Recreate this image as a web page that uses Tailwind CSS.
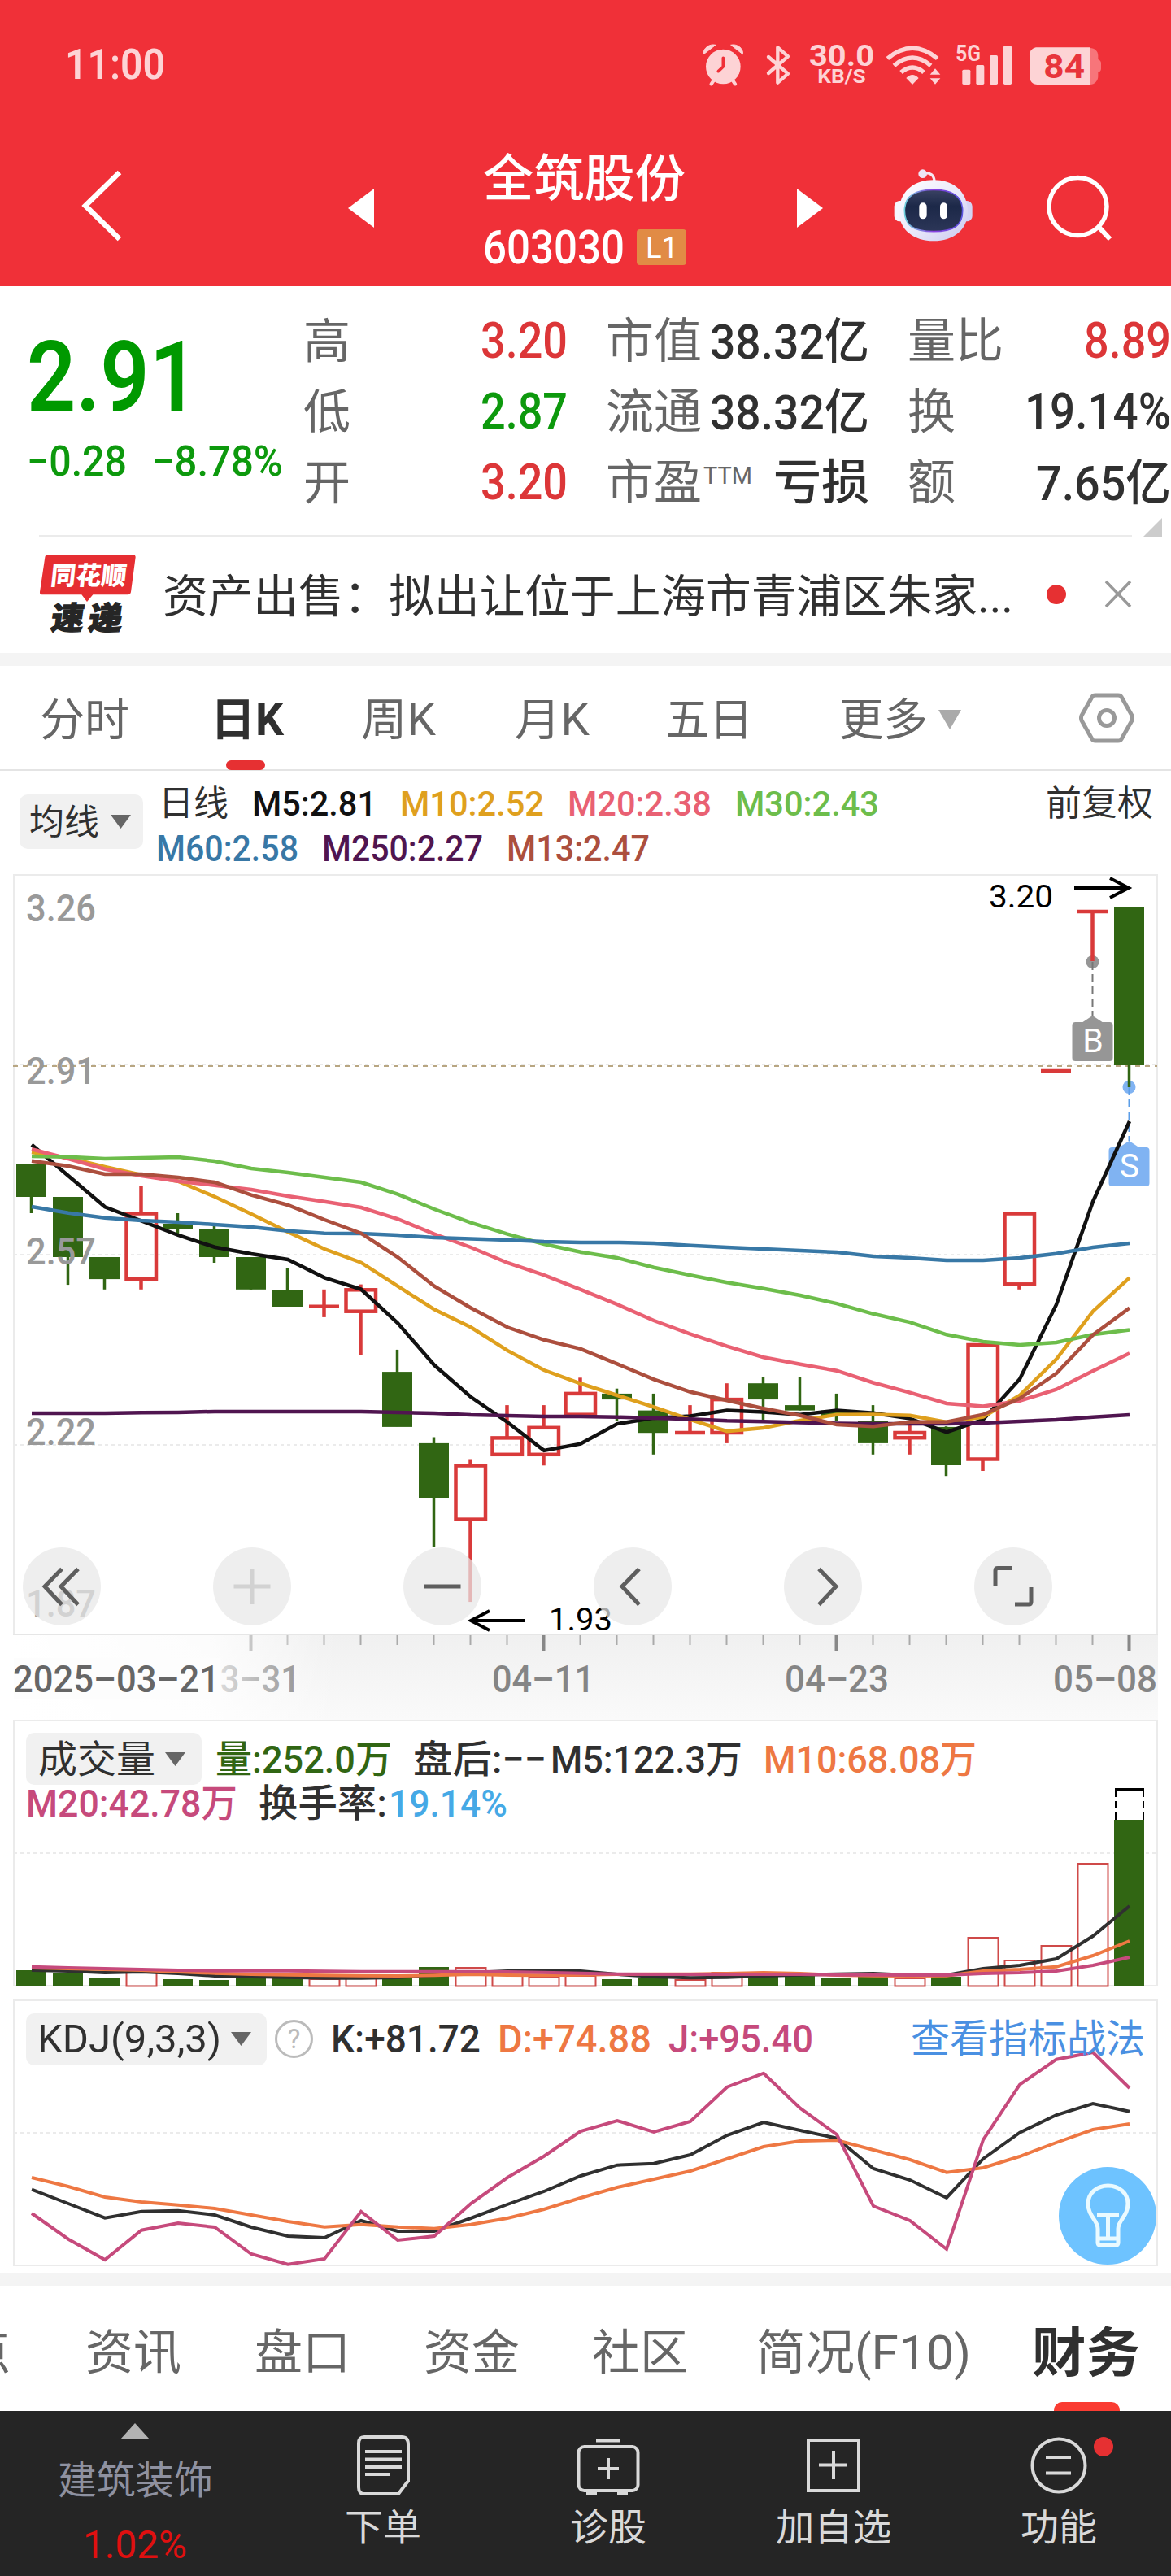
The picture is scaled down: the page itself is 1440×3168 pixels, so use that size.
<!DOCTYPE html>
<html lang="zh-CN">
<head>
<meta charset="utf-8">
<title>全筑股份 603030</title>
<script src="https://cdn.jsdelivr.net/npm/@tailwindcss/browser@4"></script>
</head>
<body class="w-[1440px] bg-white font-[Roboto,'Noto_Sans_CJK_SC',sans-serif] text-[#303030] overflow-x-hidden">

<!-- Header -->
<header class="h-[352px] bg-[#f03038] text-white">
  <div class="h-[160px] flex items-start">
    <div class="ml-[80px] mt-[54px] h-[50px] flex items-center leading-none text-[51px] font-semibold text-[#fdd3d5]"><span data-w="123">11:00</span></div>
    <svg class="ml-[637px] mt-[50px] shrink-0" width="522" height="60" viewBox="0 60 1566 180" fill="#fdd3d5">
      <circle cx="148" cy="156" r="64"/>
      <path d="M76 110c-4-22 22-40 44-34z M220 110c4-22-22-40-44-34z" stroke="#fdd3d5" stroke-width="3" stroke-linejoin="round"/>
      <path d="M112 208l-8 12M184 208l8 12" stroke="#fdd3d5" stroke-width="13" stroke-linecap="round"/>
      <path d="M148 124v32l-18 17" fill="none" stroke="#f03038" stroke-width="11" stroke-linecap="round" stroke-linejoin="round"/>
      <path d="M315 120l72 62-38 33V85l38 33-72 62" fill="none" stroke="#fdd3d5" stroke-width="13" stroke-linecap="round" stroke-linejoin="round"/>
      <text x="465" y="154" font-size="112" font-weight="700" textLength="240" lengthAdjust="spacingAndGlyphs">30.0</text>
      <text x="496" y="216" font-size="71" font-weight="700" textLength="178" lengthAdjust="spacingAndGlyphs">KB/S</text>
      <g fill="none" stroke="#fdd3d5" stroke-width="16"><path d="M754 126q92-76 184 0M778 152q68-58 136 0M804 177q42-36 84 0"/></g>
      <path d="M823 198q23-24 46 0l-23 24zM911 185h38l-19-22zM911 199h38l-19 22z"/>
      <text x="1006" y="136" font-size="84" font-weight="700" textLength="92" lengthAdjust="spacingAndGlyphs">5G</text>
      <rect x="1030" y="167" width="30" height="55" rx="5"/><rect x="1081" y="150" width="30" height="72" rx="5"/><rect x="1131" y="114" width="30" height="108" rx="5"/><rect x="1182" y="78" width="30" height="144" rx="5"/>
      <path d="M1500 87h2c16 0 29 12 29 28v14c6 2 11 7 11 13v22c0 6-5 11-11 13v15c0 16-13 30-29 30h-2z" fill="#f7757a"/>
      <path d="M1500 85h-194c-16 0-28 12-28 28v80c0 16 12 29 28 29h194z"/>
      <text x="1330" y="199" font-size="122" font-weight="700" fill="#e8343c" textLength="152" lengthAdjust="spacingAndGlyphs">84</text>
    </svg>
  </div>
  <div class="h-[192px] flex items-start">
    <svg class="ml-[96px] mt-[44px] shrink-0" width="60" height="98" viewBox="96 204 60 98"><path d="M147 212l-42 41 42 41" fill="none" stroke="#fff" stroke-width="6.5"/></svg>
    <svg class="ml-[272px] mt-[72px] shrink-0" width="32" height="48" viewBox="0 0 32 48"><path d="M32 0v48L0 24z" fill="#fff"/></svg>
    <div class="ml-[134px] w-[254px] flex flex-col">
      <div class="mt-[28px] h-[66px] flex items-center leading-none text-[62px] font-medium"><span data-w="249">全筑股份</span></div>
      <div class="mt-[17px] h-[66px] flex items-center leading-none"><span data-w="174" class="text-[58px] font-medium">603030</span><span class="ml-[15px] w-[61px] h-[44px] rounded-[4px] bg-[#e18b45] flex items-center justify-center text-[37px]"><span data-w="40">L1</span></span></div>
    </div>
    <svg class="ml-[132px] mt-[72px] shrink-0" width="32" height="48" viewBox="0 0 32 48"><path d="M0 0v48l32-24z" fill="#fff"/></svg>
    <svg class="ml-[86px] mt-[47px] shrink-0" width="100" height="92" viewBox="775 530 300 276">
      <defs>
        <linearGradient id="shell" x1="0" y1="0" x2="1" y2="1"><stop offset="0" stop-color="#fff"/><stop offset=".5" stop-color="#eceafb"/><stop offset="1" stop-color="#c9c8ef"/></linearGradient>
        <linearGradient id="rim" x1="0" y1="0" x2="1" y2="0"><stop offset="0" stop-color="#6fd0dc"/><stop offset=".5" stop-color="#8a3fe0"/><stop offset="1" stop-color="#5a55e0"/></linearGradient>
        <linearGradient id="face" x1="0" y1="0" x2="0" y2="1"><stop offset="0" stop-color="#3a4263"/><stop offset=".4" stop-color="#1c2848"/><stop offset="1" stop-color="#2c3658"/></linearGradient>
      </defs>
      <path d="M886 549c26-6 42 6 42 30" fill="none" stroke="#f6e8f2" stroke-width="10"/>
      <circle cx="885" cy="550" r="16" fill="#eee6f6"/>
      <rect x="780" y="650" width="50" height="76" rx="20" fill="#f6f5fd"/><rect x="1018" y="650" width="50" height="76" rx="20" fill="#d4d3f4"/>
      <path d="M925 573c72 0 126 42 126 118 0 66-54 107-126 107s-127-41-127-107c0-76 55-118 127-118z" fill="url(#shell)"/>
      <path d="M925 609c68 0 107 22 107 78 0 54-32 76-107 76s-107-22-107-76c0-56 39-78 107-78z" fill="url(#face)" stroke="url(#rim)" stroke-width="5"/>
      <rect x="872" y="657" width="28" height="60" rx="14" fill="#fff"/><rect x="949" y="657" width="27" height="60" rx="13.500" fill="#fff"/>
    </svg>
    <svg class="ml-[86px] mt-[50px] shrink-0" width="90" height="92" viewBox="1284 210 90 92"><circle cx="1325.500" cy="254" r="35.500" fill="none" stroke="#fff" stroke-width="5.500"/><path d="M1351 279l14 15" stroke="#fff" stroke-width="6"/></svg>
  </div>
</header>

<!-- Quote -->
<section class="h-[306px] flex leading-none">
  <div class="w-[373px] text-[#0d990d] font-medium">
    <div class="mt-[61px] ml-[33px] h-[100px] flex items-center text-[121px] font-semibold text-[#009900]"><span data-w="211">2.91</span></div>
    <div class="mt-[29px] ml-[33px] h-[50px] flex items-center text-[52px]"><span data-w="123">−0.28</span><span class="ml-[31px]" data-w="161">−8.78%</span></div>
  </div>
  <div class="w-[325px] mt-[24px] text-[58px]">
    <div class="h-[87px] flex items-center justify-between text-[#666]"><span>高</span><span class="text-[61px] font-medium text-[#dc3638]" data-w="107">3.20</span></div>
    <div class="h-[87px] flex items-center justify-between text-[#666]"><span>低</span><span class="text-[61px] font-medium text-[#0d990d]" data-w="107">2.87</span></div>
    <div class="h-[87px] flex items-center justify-between text-[#666]"><span>开</span><span class="text-[61px] font-medium text-[#dc3638]" data-w="107">3.20</span></div>
  </div>
  <div class="w-[324px] ml-[47px] mt-[24px] text-[59px]">
    <div class="h-[87px] flex items-center justify-between text-[#666]"><span data-w="118">市值</span><span class="text-[60px] font-medium text-[#303030]" data-w="196">38.32亿</span></div>
    <div class="h-[87px] flex items-center justify-between text-[#666]"><span data-w="118">流通</span><span class="text-[60px] font-medium text-[#303030]" data-w="196">38.32亿</span></div>
    <div class="h-[87px] flex items-center text-[#666]"><span data-w="118">市盈</span><span class="text-[30px] mb-[18px] ml-[2px]" data-w="60">TTM</span><span class="ml-auto font-medium text-[#303030]" data-w="118">亏损</span></div>
  </div>
  <div class="w-[324px] ml-[47px] mt-[24px] text-[59px]">
    <div class="h-[87px] flex items-center justify-between text-[#666]"><span data-w="118">量比</span><span class="text-[61px] font-medium text-[#dc3638]" data-w="107">8.89</span></div>
    <div class="h-[87px] flex items-center justify-between text-[#666]"><span>换</span><span class="text-[61px] font-medium text-[#303030]" data-w="180">19.14%</span></div>
    <div class="h-[87px] flex items-center justify-between text-[#666]"><span>额</span><span class="text-[60px] font-medium text-[#303030]" data-w="166">7.65亿</span></div>
    <svg class="ml-[289px]" width="24" height="24" viewBox="0 0 24 24"><path d="M24 0v24H0z" fill="#ccc"/></svg>
  </div>
</section>

<!-- News strip -->
<section class="h-[145px] mx-[48px] border-t-[2px] border-[#ebebeb] flex items-start leading-none">
  <svg class="mt-[21px] shrink-0" width="122" height="104" viewBox="55 65 366 312">
    <path d="M86 69h316c6 0 9 4 9 9l-17 128c-1 6-5 10-11 10H254l-22 26-20-26H66c-6 0-9-4-8-10L77 78c1-5 4-9 9-9z" fill="#e62e32"/>
    <g transform="skewX(-6)"><text x="114" y="180" font-size="94" font-weight="900" font-family="'Noto Sans CJK SC',sans-serif" fill="#fff" textLength="280" lengthAdjust="spacingAndGlyphs">同花顺</text></g>
    <g transform="skewX(-8)" fill="#262626" stroke="#262626" stroke-width="4" font-size="116" font-weight="900" font-family="'Noto Sans CJK SC',sans-serif"><text x="144" y="345" textLength="120" lengthAdjust="spacingAndGlyphs">速</text><text x="282" y="345" textLength="124" lengthAdjust="spacingAndGlyphs">递</text></g>
  </svg>
  <div class="ml-[30px] mt-[39px] h-[70px] w-[1064px] flex items-center text-[56px]"><span data-w="1046">资产出售：拟出让位于上海市青浦区朱家...</span></div>
  <span class="ml-[23px] mt-[59px] h-[24px] w-[24px] rounded-full bg-[#e63032] block shrink-0"></span>
  <svg class="ml-auto mt-[53px] shrink-0" width="34" height="36" viewBox="0 0 34 36"><path d="M2 2l30 31M32 2L2 33" stroke="#999" stroke-width="3.500"/></svg>
</section>
<div class="h-[16px] bg-[#f4f4f4]"></div>

<!-- Period tabs -->
<nav class="h-[129px] border-b-[2px] border-[#e4e4e4] flex leading-none text-[55px] text-[#666]">
  <div class="ml-[49px] h-[133px] flex items-center"><span data-w="110">分时</span></div>
  <div class="ml-[100px] w-[91px] h-[128px] relative flex items-center font-bold text-[#303030]"><span class="mt-[4px]" data-w="90">日K</span><i class="absolute left-[19px] bottom-0 w-[48px] h-[12px] rounded-[6px] bg-[#e63032]"></i></div>
  <div class="ml-[94px] h-[133px] flex items-center"><span data-w="92">周K</span></div>
  <div class="ml-[97px] h-[133px] flex items-center"><span data-w="92">月K</span></div>
  <div class="ml-[93px] h-[133px] flex items-center"><span data-w="108">五日</span></div>
  <div class="ml-[106px] h-[130px] flex items-center"><span class="mt-[3px]" data-w="109">更多</span><svg class="ml-[12px]" width="30" height="25" viewBox="0 0 30 25"><path d="M1 1h28L15 25z" fill="#aaa"/></svg></div>
  <svg class="ml-[144px] mt-[32px]" width="68" height="64" viewBox="0 0 68 64" fill="none" stroke="#999" stroke-width="5"><path d="M20 4h28q3 0 4 2l13 23q1 3 0 6L52 58q-1 2-4 2H20q-3 0-4-2L3 35q-1-3 0-6L16 6q1-2 4-2z"/><circle cx="34" cy="32" r="9.500"/></svg>
</nav>

<!-- Moving averages legend -->
<section class="h-[127px] flex items-start leading-none text-[43px]">
  <div class="ml-[24px] mt-[29px] w-[152px] h-[67px] rounded-[10px] bg-[#f1f1f1] flex items-center"><span class="ml-[12px] mt-[2px]" data-w="86">均线</span><svg class="ml-[14px]" width="25" height="17" viewBox="0 0 25 17"><path d="M0 0h25L12.500 17z" fill="#666"/></svg></div>
  <div class="ml-[16px] mt-[13px]">
    <div class="h-[55px] w-[1226px] flex items-center"><span class="ml-[3px]" data-w="86">日线</span>
      <span class="ml-[29px] font-medium text-[#111]" data-w="153">M5:2.81</span><span class="ml-[29px] font-medium text-[#dfa01e]" data-w="177">M10:2.52</span><span class="ml-[29px] font-medium text-[#e96173]" data-w="177">M20:2.38</span><span class="ml-[29px] font-medium text-[#6dbd4b]" data-w="177">M30:2.43</span><span class="ml-auto" data-w="132">前复权</span></div>
    <div class="h-[55px] flex items-center text-[44px] font-medium"><span class="text-[#3878a6]" data-w="175">M60:2.58</span><span class="ml-[29px] text-[#501550]" data-w="198">M250:2.27</span><span class="ml-[29px] text-[#ac4f3e]" data-w="176">M13:2.47</span></div>
  </div>
</section>

<!-- Candlestick chart -->
<svg class="block" width="1440" height="936" viewBox="0 1074 1440 936" id="price" fill="none"></svg>

<!-- Date axis -->
<svg class="block" width="1440" height="104" viewBox="0 2010 1440 104" id="axis" fill="none"></svg>

<!-- Volume -->
<section class="relative h-[344px] leading-none text-[47px]">
  <div class="absolute left-[32px] top-[16px] font-medium">
    <div class="h-[64px] flex items-center"><span class="w-[216px] h-[64px] rounded-[10px] bg-[#f1f1f1] flex items-center font-normal"><span class="ml-[15px]" data-w="144">成交量</span><svg class="ml-[12px]" width="25" height="17" viewBox="0 0 25 17"><path d="M0 0h25L12.500 17z" fill="#666"/></svg></span>
      <span class="ml-[17px] text-[#316613]" data-w="217">量:252.0万</span><span class="ml-[26px]" data-w="164">盘后:−−</span><span class="ml-[5px]" data-w="236">M5:122.3万</span><span class="ml-[26px] text-[#ee7843]" data-w="262">M10:68.08万</span></div>
    <div class="h-[45px] flex items-center"><span class="text-[#c64a7c]" data-w="260">M20:42.78万</span><span class="ml-[26px]" data-w="158">换手率:</span><span class="ml-[2px] text-[#45a9e6]" data-w="146">19.14%</span></div>
  </div>
  <svg class="block" width="1440" height="344" viewBox="0 2114 1440 344" id="volume" fill="none"></svg>
</section>

<!-- KDJ -->
<section class="relative h-[336px] leading-none text-[48px]">
  <div class="absolute left-[32px] top-[16px] w-[1376px] h-[65px] flex items-center">
    <span class="w-[296px] h-[64px] rounded-[10px] bg-[#f1f1f1] flex items-center"><span class="ml-[14px]" data-w="226">KDJ(9,3,3)</span><svg class="ml-[12px]" width="25" height="17" viewBox="0 0 25 17"><path d="M0 0h25L12.500 17z" fill="#666"/></svg></span>
    <span class="ml-[10px] w-[47px] h-[47px] rounded-full border-[3px] border-[#bbb] text-[#bbb] text-[33px] flex items-center justify-center">?</span>
    <span class="ml-[22px] font-medium" data-w="184">K:+81.72</span><span class="ml-[21px] font-medium text-[#ee7843]" data-w="189">D:+74.88</span><span class="ml-[21px] font-medium text-[#c64a7c]" data-w="178">J:+95.40</span>
    <span class="ml-auto text-[#4a90e2]" data-w="288">查看指标战法</span>
  </div>
  <svg class="block" width="1440" height="336" viewBox="0 2458 1440 336" id="kdj" fill="none"></svg>
</section>
<div class="h-[16px] bg-[#f4f4f4]"></div>

<!-- Detail tabs -->
<nav class="h-[154px] flex leading-none text-[59px] text-[#666] overflow-hidden">
  <div class="ml-[-46px] h-[165px] flex items-center"><span data-w="59">点</span></div>
  <div class="ml-[92px] h-[165px] flex items-center"><span data-w="118">资讯</span></div>
  <div class="ml-[90px] h-[165px] flex items-center"><span data-w="118">盘口</span></div>
  <div class="ml-[90px] h-[165px] flex items-center"><span data-w="118">资金</span></div>
  <div class="ml-[89px] h-[165px] flex items-center"><span data-w="118">社区</span></div>
  <div class="ml-[84px] h-[165px] flex items-center"><span data-w="264">简况(F10)</span></div>
  <div class="ml-[75px] h-[154px] relative"><div class="h-[166px] flex items-center font-bold text-[66px] text-[#303030]"><span data-w="133">财务</span></div><i class="absolute left-[27px] bottom-0 w-[81px] h-[11px] rounded-t-[10px] bg-[#fa3c32]"></i></div>
</nav>

<!-- Bottom bar -->
<footer class="h-[204px] bg-[#252525] text-[#d9d9d9] leading-none flex text-[46px]">
  <div class="w-[332px] flex flex-col items-center">
    <svg class="mt-[15px]" width="36" height="20" viewBox="0 0 36 20"><path d="M0 20h36L18 0z" fill="#b3b3b3"/></svg>
    <div class="mt-[27px] h-[48px] flex items-center text-[47.500px] text-[#8e91a0]"><span data-w="191">建筑装饰</span></div>
    <div class="mt-[30px] h-[50px] flex items-center text-[48px] text-[#e01010]"><span data-w="128">1.02%</span></div>
  </div>
  <div class="w-[277px] flex flex-col items-center">
    <svg class="mt-[29px]" width="70" height="76" viewBox="435 2993 70 76" fill="none" stroke="#d9d9d9" stroke-width="4"><path d="M447 2996h46q8 0 8 9v45l-12 16h-42q-7 0-7-8v-54q0-8 7-8zM448 3014h45M448 3023.500h45M448 3033h45M448 3042h31"/></svg>
    <div class="mt-[13px] h-[50px] flex items-center"><span data-w="94">下单</span></div>
  </div>
  <div class="w-[277px] flex flex-col items-center">
    <svg class="mt-[32px]" width="80" height="72" viewBox="707 2996 80 72" fill="none" stroke="#d9d9d9" stroke-width="4"><rect x="710.500" y="3008" width="73" height="54" rx="7"/><path d="M732 3000.500h30M747 3022v26M734 3035h26M720 3065h13M758 3065h13"/></svg>
    <div class="mt-[14px] h-[50px] flex items-center"><span data-w="94">诊股</span></div>
  </div>
  <div class="w-[277px] flex flex-col items-center">
    <svg class="mt-[34px]" width="66" height="66" viewBox="991 2998 66 66" fill="none" stroke="#d9d9d9" stroke-width="4"><rect x="993" y="3000" width="62" height="62"/><path d="M1024 3013v35M1006 3030.500h35"/></svg>
    <div class="mt-[18px] h-[50px] flex items-center"><span data-w="142">加自选</span></div>
  </div>
  <div class="w-[277px] flex flex-col items-center relative">
    <svg class="mt-[31px]" width="70" height="72" viewBox="1266 2995 70 72" fill="none" stroke="#d9d9d9" stroke-width="4"><circle cx="1301" cy="3031" r="32.500"/><path d="M1285 3021h31M1285 3040.500h31"/></svg>
    <i class="absolute left-[182px] top-[32px] w-[24px] h-[24px] rounded-full bg-[#e63032]"></i>
    <div class="mt-[15px] h-[50px] flex items-center"><span data-w="94">功能</span></div>
  </div>
</footer>

<script>
// Fit each label to its column width; 0.8415em is the baseline of a one-em line box.
document.querySelectorAll('[data-w]').forEach(el => {
  const w = el.dataset.w, t = el.textContent;
  el.style.flexShrink = 0;
  el.innerHTML = `<svg width="${w}" height="1em" overflow="visible"><text x="0" y="0.8415em" fill="currentColor" textLength="${w}" lengthAdjust="spacingAndGlyphs">${t}</text></svg>`;
});

const X = i => 38.5 + 45 * i;
// The lower part of the price pane is drawn slightly taller than the upper part.
const P = y => y > 1560 ? +(1560 + (y - 1560) * 1.0332).toFixed(1) : y;
const G = '#316613', R = '#d93a3a';
const line = (ys, c, w = 4.5) => `<polyline points="${ys.map((y, i) => (X(i) + .5) + ',' + y).join(' ')}" stroke="${c}" stroke-width="${w}"/>`;
const seg = (x1, y1, x2, y2, c, w, extra = '') => `<path d="M${x1} ${y1}L${x2} ${y2}" stroke="${c}" stroke-width="${w}" ${extra}/>`;
const label = (x, y, w, t, c, s, wt = 400, extra = '') => `<text x="${x}" y="${y}" fill="${c}" font-size="${s}" font-weight="${wt}" textLength="${w}" lengthAdjust="spacingAndGlyphs" ${extra}>${t}</text>`;

// [type, bodyTop, bodyBottom, high, low]
const candles = [
 ['g',1430,1471,1430,1491],['g',1471,1545,1471,1578.5],['g',1545,1571.7,1545,1584],['r',1491.5,1571.5,1457,1584],
 ['g',1504,1511,1491,1516],['g',1511,1545,1507,1552],['g',1545,1584,1545,1584],['g',1584.3,1604.5,1558,1604],
 ['l',1604.3,1604.3,1584,1617],['r',1584.5,1610,1578,1662.5],['g',1682,1747.7,1655.7,1747],['g',1767,1832,1760,1891],
 ['r',1793.7,1857.7,1786,1956],['r',1760.7,1780.5,1721.7,1780],['r',1748.5,1780.5,1721.7,1793.5],['r',1708,1733,1689,1733],
 ['g',1708,1715,1702,1741],['g',1728,1754.7,1708,1780.5],['l',1754.5,1754.5,1721.7,1754],['r',1715,1754.5,1695.7,1767],
 ['g',1695.7,1715,1688.7,1740],['g',1721.7,1728,1688.7,1728],['g',1728,1734.5,1708,1741],['g',1741,1767,1721.7,1780.5],
 ['r',1754.5,1760.5,1745,1780.5],['g',1747.7,1793.3,1747,1806],['r',1650,1786,1650,1800],['r',1491.5,1577.7,1491,1584],
 ['l',1316,1316,1316,1316],['l',1120,1120,1120,1181],['g',1115,1309,1115,1336]];
const ma = [
 ['#111',[1406.7,1445,1483.3,1500.5,1518,1532.7,1541,1548,1570,1583.7,1624,1674,1712,1742,1775.7,1767.7,1744,1737,1734.7,1728,1730,1733,1728,1731,1737.7,1754,1739,1690.7,1602,1476.7,1378]],
 ['#dfa01e',[1416,1423,1434,1444,1451.7,1470.7,1492,1514,1535,1551.7,1580,1607.7,1629,1656.7,1680,1696,1710,1724,1739,1752.7,1748.7,1740,1733,1732.7,1734,1742,1735.7,1710,1667,1610,1570]],
 ['#e96173',[1412.3,1424,1436.7,1445,1451.7,1456.7,1462,1470,1476.7,1484,1498,1516.7,1533,1552,1567,1584,1601.7,1621,1637,1651.7,1664.7,1673,1680.7,1695,1706.7,1719.7,1723,1716.7,1703,1681,1660]],
 ['#6dbd4b',[1421,1421.7,1424,1423,1422,1427,1436,1441,1447,1453,1467.7,1486,1502.7,1516.7,1529,1538.7,1546,1557.7,1567,1575.7,1583,1591,1600.7,1613,1623,1637.7,1646,1650,1647,1637.7,1632]],
 ['#3878a6',[1483,1490.7,1496.7,1500,1502,1505,1508,1512.7,1515.7,1516,1518,1521,1522.5,1524,1526,1527,1527,1528,1530.7,1533,1535,1537,1539,1544,1546,1549,1549,1546,1540.7,1533,1528]],
 ['#501550',[1731.3,1731.3,1731.3,1730.5,1730.3,1729.3,1729.3,1729.3,1729.3,1729.3,1730.3,1731.3,1733.3,1734.3,1735.3,1735.3,1736,1737,1738.3,1740.3,1741.3,1742.3,1743.3,1744,1744,1744,1743,1741,1739,1736,1733.3]],
 ['#ac4f3e',[1426.7,1433,1443,1443,1447,1453,1468.7,1481,1499,1515.7,1545,1580,1606,1629,1644,1654.7,1672.7,1691,1706,1716,1725.7,1734,1745,1747,1741.7,1741.7,1733,1713.7,1684,1638,1606]]];

let s = `<path d="M17 2010V1075H1423V2010" stroke="#ebebeb" stroke-width="2"/><path d="M16 2009H1424" stroke="#e6e6e6" stroke-width="2"/>`;
[1308,1542,1776].forEach(y => s += seg(17, y, 1423, y, '#ebebeb', 2, 'stroke-dasharray="4 4"'));
s += seg(16, 1310, 1423, 1310, '#b8a682', 2, 'stroke-dasharray="6 6"');
const tag = (x, y, c, t) => `<path d="M${x} ${y - 7}l12 8h9q4 0 4 4v40q0 4-4 4h-42q-4 0-4-4v-40q0-4 4-4h9z" fill="${c}"/><text x="${x + .5}" y="${y + 38}" font-size="41" fill="#fff" text-anchor="middle">${t}</text>`;
s += `<circle cx="1343.500" cy="1182" r="8" fill="#969696"/><circle cx="1388.500" cy="1336" r="8" fill="#80b3f2"/>`;
s += seg(1343.5, 1182, 1343.5, 1248, '#777', 2, 'stroke-dasharray="10 5"') + seg(1388.5, 1336, 1388.5, 1402, '#5c9ee8', 2, 'stroke-dasharray="10 5"');
s += tag(1343.5, 1255, '#969696', 'B') + tag(1388.5, 1409, '#80b3f2', 'S');
candles.forEach(([t, a, b, h, l], i) => {
  const x = X(i);
  [a, b, h, l] = [a, b, h, l].map(P);
  if (t === 'g') s += seg(x, h, x, l, G, 3.5) + `<rect x="${x - 18.5}" y="${a}" width="37" height="${b - a}" fill="${G}"/>`;
  if (t === 'r') s += seg(x, h, x, a, R, 4.5) + seg(x, b, x, l, R, 4.5) + `<rect x="${x - 18}" y="${a}" width="36.500" height="${b - a}" stroke="${R}" stroke-width="4.500"/>`;
  if (t === 'l') s += seg(x - 18.5, a, x + 18.5, a, R, 4.5) + (l > h ? seg(x, h, x, l, R, 4.5) : '');
});
[['3.26',1132],['2.91',1332],['2.57',1553.7],['2.22',1776],['1.87',1987]].forEach(([t, y]) => s += label(32, y, 86, t, '#999', 47, 500));
ma.forEach(([c, ys]) => s += line(ys.map(P), c));
s += `<path d="M1321 1091H1387M1365 1079l23 12-23 12M646 1992H580M602 1980l-23 12 23 12" stroke="#000" stroke-width="4"/>`;
s += label(1216, 1115, 79, '3.20', '#000', 39) + label(675, 2003.5, 78, '1.93', '#000', 39);
[76,310,544,778,1012,1246].forEach(x => s += `<circle cx="${x}" cy="1950" r="48" fill="#e8e8e8" fill-opacity=".72"/>`);
s += `<g stroke="#5e5e5e" stroke-width="5" transform="translate(0 12.500)"><path d="M76 1916l-21 21.500 21 22.500M96 1916l-21 21.500 21 22.500M521.500 1937.500h45M786 1916l-21 21.500 21 22.500M1007 1916l21 21.500-21 22.500"/><path d="M1224 1937v-19q0-3 3-3h18M1248 1959.500h17q3 0 3-3v-18"/></g><path d="M287.500 1950h45M310 1928v44" stroke="#d2d2d2" stroke-width="5"/>`;
document.getElementById('price').innerHTML = s;

s = `<defs><linearGradient id="v" x1="0" y1="0" x2="0" y2="1"><stop offset="0" stop-color="#f0f0f0"/><stop offset="1" stop-color="#fafafa"/></linearGradient><linearGradient id="h" x1="0" y1="0" x2="1" y2="0"><stop offset="0" stop-color="#fff"/><stop offset=".6" stop-color="#fff" stop-opacity=".8"/><stop offset="1" stop-color="#fff" stop-opacity="0"/></linearGradient></defs>`;
s += `<rect x="17" y="2010" width="1407" height="104" fill="url(#v)"/>`;
for (let i = 6; i <= 30; i++) s += (i - 6) % 8 ? seg(X(i), 2010, X(i), 2022, '#aaa', 2) : seg(X(i), 2010, X(i), 2030, '#888', 4);
s += label(247, 2080, 122, '03–31', '#777', 47, 500);
s += `<rect x="16" y="2010" width="400" height="104" fill="url(#h)"/><rect x="17" y="2038" width="253" height="50" fill="#fdfdfd"/>`;
s += label(16, 2080, 254, '2025–03–21', '#666', 47, 500) + label(605, 2080, 126, '04–11', '#858585', 47, 500) + label(965, 2080, 128, '04–23', '#858585', 47, 500) + label(1295, 2080, 128, '05–08', '#858585', 47, 500);
document.getElementById('axis').innerHTML = s;

// [top, rising]
const vol = [[2422],[2425],[2431],[2425,1],[2433],[2434],[2429],[2432],[2433,1],[2432,1],[2429],[2418],[2419,1],[2428,1],[2430,1],[2429,1],[2433],[2432],[2434,1],[2425,1],[2428],[2428],[2431],[2430],[2432,1],[2430],[2382,1],[2410,1],[2392,1],[2291,1],[2237]];
s = `<rect x="17" y="2115" width="1406" height="326" stroke="#ebebeb" stroke-width="2"/>` + seg(17, 2278, 1423, 2278, '#ebebeb', 2, 'stroke-dasharray="4 4"');
vol.forEach(([y, r], i) => s += r ? `<rect x="${X(i) - 18}" y="${y}" width="37" height="${2441.5 - y}" stroke="#cf4a49" stroke-width="2"/>` : `<rect x="${X(i) - 18.5}" y="${y}" width="37" height="${2442 - y}" fill="${G}"/>`);
s += `<path d="M1371 2199.500H1407" stroke="#000" stroke-width="3"/><path d="M1372 2200V2237M1406 2200V2237" stroke="#000" stroke-width="2" stroke-dasharray="9 5"/>`;
s += line([2422,2423,2425,2424,2426,2429,2430,2430.7,2431.7,2431.7,2431,2428,2425,2423,2423,2423,2427,2430,2431.3,2430.7,2429,2427.7,2426.7,2426,2428,2428,2420,2416,2408,2380,2343], '#303030', 4);
s += line([2419,2420,2421,2422,2424,2425.7,2427,2427.7,2428.3,2428.7,2429,2428.3,2427,2428,2428.3,2427.7,2427,2426.7,2426.7,2426,2425,2426,2428,2428.7,2429,2428.7,2423,2421,2417.7,2404,2386], '#ee7843', 4);
s += line([2417.7,2419,2420,2421,2422,2422.7,2422.7,2422.7,2423.3,2423.7,2423.7,2423.7,2423.7,2424,2424.7,2425.7,2426.7,2427,2427,2427,2427,2427,2427.7,2427.7,2428,2428,2426,2425,2423,2416,2406], '#c64a7c', 4);
document.getElementById('volume').innerHTML = s;

s = `<rect x="17" y="2459" width="1406" height="326" stroke="#ebebeb" stroke-width="2"/>` + seg(17, 2622, 1423, 2622, '#ebebeb', 2, 'stroke-dasharray="4 4"');
s += line([2691.7,2709,2726.7,2718.7,2717.7,2723,2738,2749,2751,2730,2743,2743,2727,2710,2694,2675,2661.7,2659.7,2649,2625,2609,2619,2628.7,2666,2680,2701.7,2654,2621.7,2600,2586,2595.7], '#303030', 4);
s += line([2677,2688,2701,2707,2710.7,2715,2723,2731,2737.7,2734.7,2737.7,2739.7,2734.7,2727,2716,2702,2689,2679,2669,2654,2639,2632,2631,2643,2655,2670.7,2665,2651,2634,2618,2611], '#ee7843', 4);
s += line([2721,2752.7,2778,2741.7,2733,2738,2771,2783.7,2777,2718.7,2754,2749,2709,2677,2650.7,2620,2607,2621,2608,2565.7,2548.7,2591.7,2624,2712,2730,2765,2630.7,2562.7,2531.7,2523,2567], '#c64a7c', 4);
s += `<circle cx="1362" cy="2724" r="60" fill="#6ec3ff"/><g stroke="#eafaff" stroke-width="5"><path d="M1350 2740c0-11-12-15-12-31 0-13 11-22 24.500-22s24.500 9 24.500 22c0 16-12 20-12 31v17q0 3-3 3h-19q-3 0-3-3zM1350 2752h25M1349 2722.500h27M1362.500 2722v28"/></g>`;
document.getElementById('kdj').innerHTML = s;
</script>
</body>
</html>
